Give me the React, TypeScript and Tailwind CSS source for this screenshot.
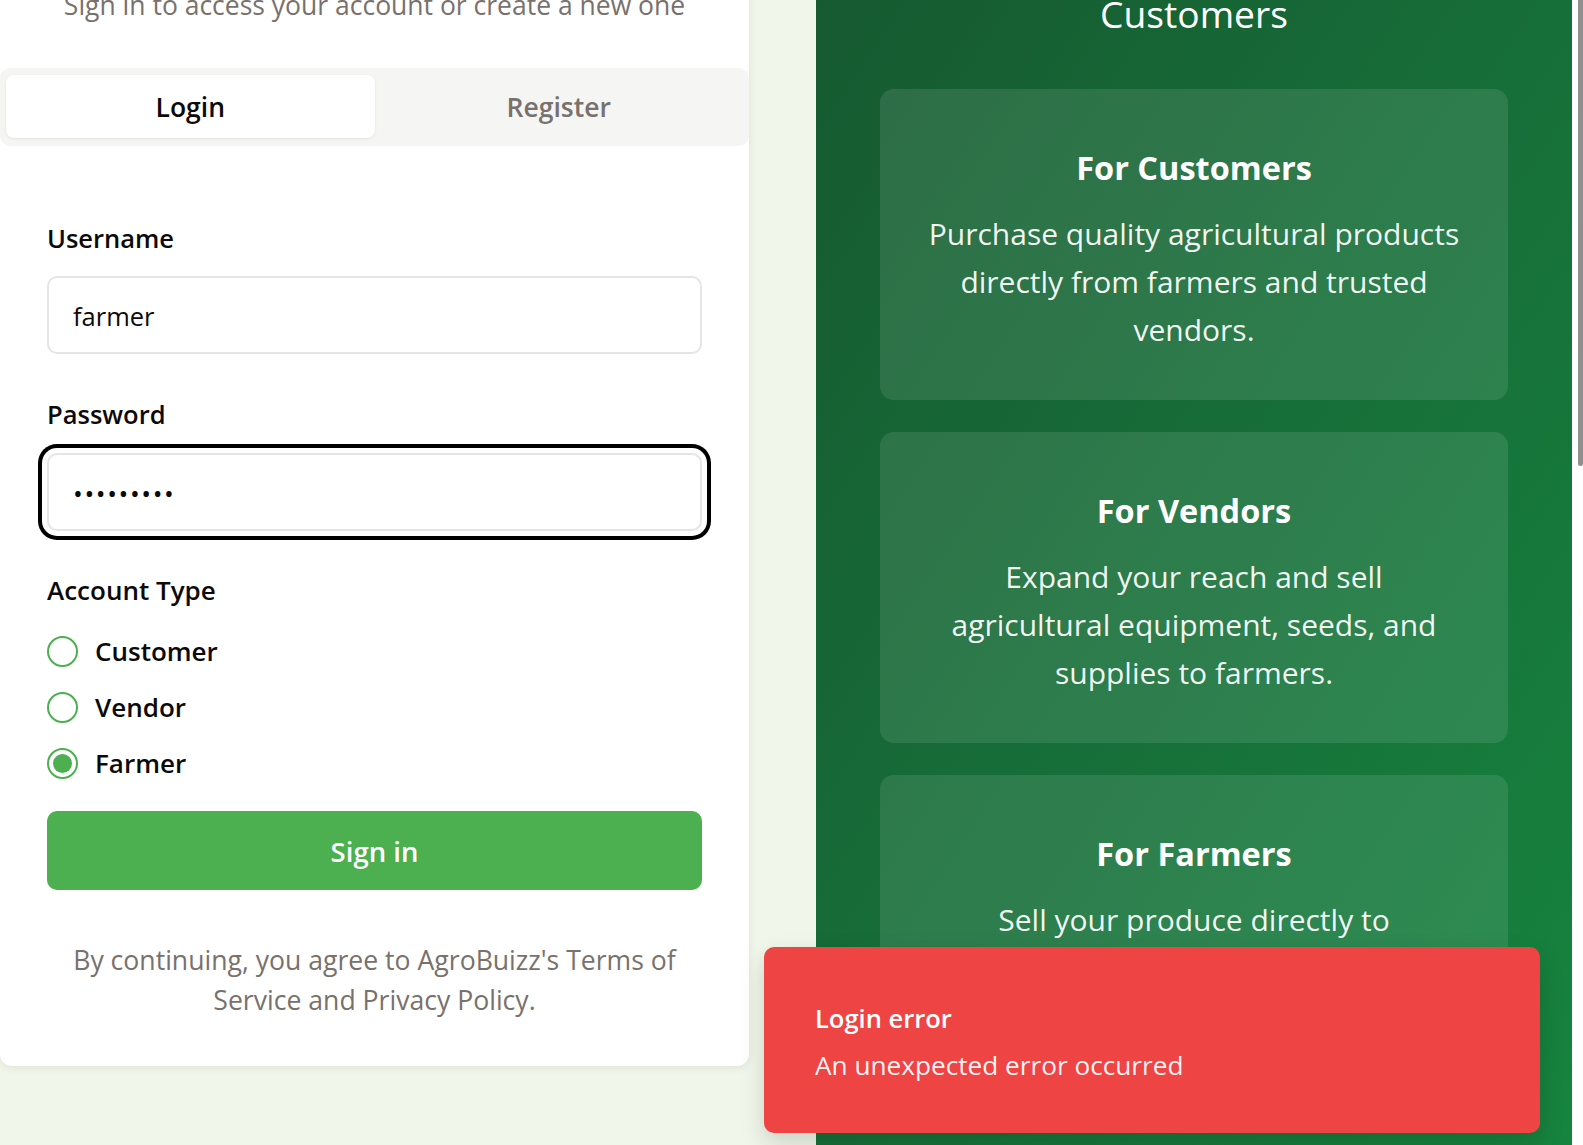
import React from "react";

function Radio({ label, checked }: { label: string; checked?: boolean }) {
  return (
    <div className="flex h-[40px] items-center gap-[17px]">
      <span className="flex h-[31px] w-[31px] shrink-0 items-center justify-center rounded-full border-2 border-[#4caf50] bg-white">
        {checked ? <span className="h-[19px] w-[19px] rounded-full bg-[#4caf50]" /> : null}
      </span>
      <span className="text-[26px] font-semibold leading-[40px] text-[#0c0a09]">{label}</span>
    </div>
  );
}

function InfoCard({ title, lines }: { title: string; lines: string[] }) {
  return (
    <div className="rounded-[14px] bg-white/10 px-[30px] pb-[46px] pt-[52px] text-center">
      <h3 className="text-[32.5px] font-bold leading-[54px] text-white">{title}</h3>
      <p className="mt-[15px] text-[30px] leading-[48px] text-white/95">
        {lines.map((l, i) => (
          <React.Fragment key={i}>
            {l}
            {i < lines.length - 1 ? <br /> : null}
          </React.Fragment>
        ))}
      </p>
    </div>
  );
}

export default function App() {
  return (
    <div
      className="relative flex h-[1145px] w-full overflow-hidden bg-[#f0f6e9]"
      style={{ fontFamily: '"Open Sans", "Noto Sans", sans-serif' }}
    >
      <div className="flex min-w-0 flex-1">
        {/* Left column */}
        <div className="w-[749px] shrink-0">
          <div className="-mt-[30px] rounded-[12px] bg-white pt-[16px] shadow-[0_2px_8px_rgba(0,0,0,0.08)]">
            <p className="text-center text-[26.5px] leading-[38px] text-[#78716c]">
              Sign in to access your account or create a new one
            </p>
            <div className="mt-[44px] grid h-[78px] grid-cols-2 rounded-[10px] bg-[#f5f5f4] px-[6px] pb-[8px] pt-[7px]">
              <div className="flex items-center justify-center rounded-[8px] bg-white pt-[3px] text-[26.5px] font-semibold text-[#0c0a09] shadow-[0_1px_3px_rgba(0,0,0,0.08)]">
                Login
              </div>
              <div className="flex items-center justify-center pt-[3px] text-[26.5px] font-semibold text-[#78716c]">
                Register
              </div>
            </div>

            <div className="px-[47px] pb-[46px] pt-[74px]">
              <label className="block text-[25.5px] font-semibold leading-[36px] text-[#0c0a09]">Username</label>
              <div className="mt-[20px] flex h-[78px] items-center rounded-[10px] border-2 border-[#e7e5e4] bg-white pl-[24px] pt-[3px] text-[25.5px] text-[#0c0a09]">
                farmer
              </div>

              <label className="mt-[42px] block text-[25.5px] font-semibold leading-[36px] text-[#0c0a09]">Password</label>
              <div className="mt-[21px] flex h-[78px] items-center rounded-[10px] border-2 border-[#e7e5e4] bg-white pl-[24px] pt-[2px] text-[26px] tracking-[1.6px] text-[#0c0a09] shadow-[0_0_0_5px_#ffffff,0_0_0_9px_#000000]">
                •••••••••
              </div>

              <label className="mt-[41px] block text-[26px] font-semibold leading-[36px] text-[#0c0a09]">Account Type</label>
              <div className="mt-[23px] flex flex-col gap-[16px]">
                <Radio label="Customer" />
                <Radio label="Vendor" />
                <Radio label="Farmer" checked />
              </div>

              <button className="mt-[28px] flex h-[79px] w-full items-center justify-center rounded-[10px] bg-[#4caf50] pt-[3px] text-[27.5px] font-semibold text-white">
                Sign in
              </button>

              <p className="mt-[50px] text-center text-[26.6px] leading-[40px] text-[#78716c]">
                By continuing, you agree to AgroBuizz's Terms of
                <br />
                Service and Privacy Policy.
              </p>
            </div>
          </div>
        </div>

        <div className="w-[67px] shrink-0" />

        {/* Right green panel */}
        <div className="min-w-0 flex-1 bg-gradient-to-br from-[#165a31] to-[#16843f] px-[64px]">
          <h2 className="-mt-[10px] text-center text-[37.2px] leading-[48px] text-white">Customers</h2>
          <div className="mt-[51px] flex flex-col gap-[32px]">
            <InfoCard
              title="For Customers"
              lines={["Purchase quality agricultural products", "directly from farmers and trusted", "vendors."]}
            />
            <InfoCard
              title="For Vendors"
              lines={["Expand your reach and sell", "agricultural equipment, seeds, and", "supplies to farmers."]}
            />
            <InfoCard
              title="For Farmers"
              lines={["Sell your produce directly to", "customers and vendors, and get", "the best prices for your harvest."]}
            />
          </div>
        </div>
      </div>

      {/* Scrollbar */}
      <div className="flex w-[11px] shrink-0 justify-end bg-white">
        <div className="h-[466px] w-[5px] rounded-b-[3px] bg-[#8f8f8f]" />
      </div>

      {/* Toast */}
      <div className="absolute bottom-[12px] right-[43px] w-[776px] rounded-[10px] bg-[#ef4444] px-[51px] pb-[50px] pt-[53px] shadow-[0_10px_25px_rgba(0,0,0,0.15)]">
        <div className="text-[25.5px] font-semibold leading-[36px] text-white">Login error</div>
        <div className="mt-[11px] text-[26.2px] leading-[36px] text-white/95">An unexpected error occurred</div>
      </div>
    </div>
  );
}
